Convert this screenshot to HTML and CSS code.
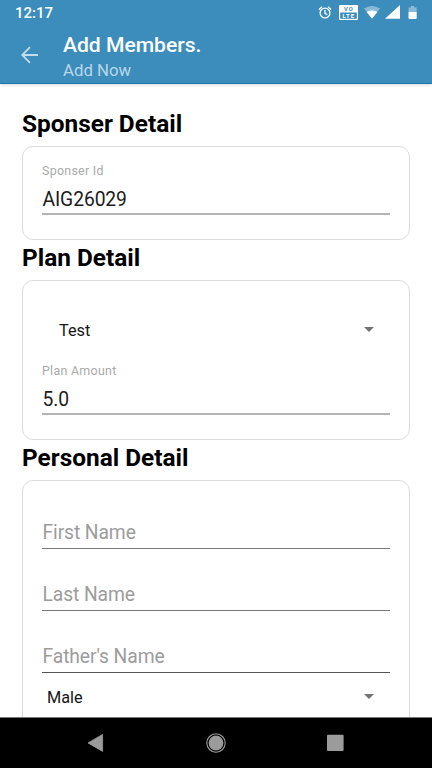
FILE: index.html
```html
<!DOCTYPE html>
<html lang="en">
<head>
<meta charset="utf-8">
<title>Add Members</title>
<link rel="stylesheet" href="styles.css">
</head>
<body>
<div class="screen">
  <header class="top">
    <div class="status">
      <span class="clock">12:17</span>
      <svg class="status-icons" width="102" height="20" viewBox="318 3 102 20">
        <g fill="none" stroke="#fff" stroke-width="1.3">
          <circle cx="325" cy="13" r="4.9"/>
          <path d="M325 10v3.3l2.3 1.4M319 9.4l3-2.6M331 9.4l-3-2.6"/>
        </g>
        <rect x="339" y="5" width="19" height="15" rx="1" fill="#fff"/>
        <rect x="340.2" y="12.5" width="16.6" height="6.3" fill="#3c8dbc"/>
        <text class="vo" x="348.8" y="11.2">VO</text>
        <text class="lte" x="348.8" y="18.2">LTE</text>
        <path d="M364 8.5Q372 3.5 380 8.5L372 18.4Z" fill="#fff" opacity=".4"/>
        <path d="M366.7 11.9Q372 9.3 377.3 11.9L372 18.4Z" fill="#fff"/>
        <path d="M385 18.8L400 5v13.8Z" fill="#fff"/>
        <path d="M408.5 12V7.6h2.4V6h3.3v1.6h2.5V12Z" fill="#fff" opacity=".4"/>
        <path d="M408.5 12h8.2v6q0 .9-.9.9h-6.4q-.9 0-.9-.9Z" fill="#fff"/>
      </svg>
    </div>
    <div class="bar">
      <svg class="back" width="18" height="18" viewBox="0 0 18 18"><path d="M17 9H1.5M9 1.2L1.2 9L9 16.8"/></svg>
      <div class="titles">
        <h1>Add Members.</h1>
        <p>Add Now</p>
      </div>
    </div>
  </header>
  <main>
    <h2>Sponser Detail</h2>
    <section class="card sponser">
      <div class="field readonly"><label>Sponser Id</label><div class="value">AIG26029</div></div>
    </section>
    <h2>Plan Detail</h2>
    <section class="card plan">
      <div class="select inset"><span>Test</span><i class="caret"></i></div>
      <div class="field readonly"><label>Plan Amount</label><div class="value">5.0</div></div>
    </section>
    <h2>Personal Detail</h2>
    <section class="card personal">
      <div class="field empty"><div class="value">First Name</div></div>
      <div class="field empty"><div class="value">Last Name</div></div>
      <div class="field empty"><div class="value">Father's Name</div></div>
      <div class="select"><span>Male</span><i class="caret"></i></div>
    </section>
  </main>
  <nav class="nav">
    <svg width="432" height="51" viewBox="0 717 432 51">
      <g fill="#9b9b9b">
        <path d="M88 742.9L102.6 734.4V751.4Z" stroke="#9b9b9b" stroke-width=".8" stroke-linejoin="round"/>
        <circle cx="216" cy="743" r="7.4"/>
        <circle cx="216" cy="743" r="9.2" fill="none" stroke="#9b9b9b" stroke-width="1.1"/>
        <rect x="327" y="734.7" width="16.6" height="16.3" rx="1"/>
      </g>
    </svg>
  </nav>
</div>
</body>
</html>
```

FILE: styles.css
```css
* { box-sizing: border-box; }
body { margin: 0; font-family: Roboto, sans-serif; color: #000; background: #fff; }
h1, h2, p { margin: 0; }
svg { display: block; }
.screen { height: 768px; display: flex; flex-direction: column; overflow: hidden; }

.top { flex: none; height: 84px; background: #3c8dbc; border-bottom: 1px solid #1878b0; color: #fff; box-shadow: 0 1px 3px rgba(0,0,0,.16); z-index: 1; }
.status { height: 26px; display: flex; justify-content: space-between; padding: 3px 12px 0 15px; }
.clock { font-size: 15px; font-weight: 500; line-height: 21px; }
.vo, .lte { font-family: Roboto, sans-serif; font-weight: 700; text-anchor: middle; }
.vo { font-size: 5.8px; fill: #3c8dbc; letter-spacing: .8px; }
.lte { font-size: 6px; fill: #fff; letter-spacing: .9px; }
.bar { height: 57px; display: flex; padding: 6px 0 0 21px; }
.back { margin-top: 14px; fill: none; stroke: #c3dceb; stroke-width: 1.8; }
.titles { margin-left: 24px; }
h1 { font-size: 21.1px; font-weight: 500; line-height: 26px; }
.titles p { font-size: 16.8px; line-height: 24px; color: #b9d6e7; }

main { flex: 1; min-height: 0; overflow: hidden; padding: 22px 22px 0; }
h2 { height: 40px; font-size: 24.4px; font-weight: 700; line-height: 36px; }
.card { border: 1px solid #dcdcdc; border-radius: 11px; padding: 0 19px; }
.sponser { height: 94px; padding-top: 15px; }
.plan { height: 160px; padding-top: 29px; }
.personal { height: 300px; padding-top: 38px; }
.field label { display: block; font-size: 12.4px; line-height: 18px; height: 18px; color: #aaa; letter-spacing: .3px; }
.field .value { font-size: 19.3px; font-weight: 400; line-height: 27px; padding-left: .5px; letter-spacing: -.1px; }
.readonly .value { height: 35px; padding-top: 6px; border-bottom: 2px solid #b4b4b4; color: #1c1c1c; }
.empty .value { height: 30px; margin-bottom: 32px; border-bottom: 1px solid #777; color: #9c9c9c; }
.empty:nth-child(3) .value { margin-bottom: 8px; border-color: #555; }
.select { display: flex; align-items: center; justify-content: space-between; height: 31px; padding: 0 16px 0 5px; font-size: 16.3px; color: #161616; }
.select span { padding-top: 2px; }
.inset { padding-left: 17px; height: 39px; margin-bottom: 13px; }
.caret { border: 5px solid transparent; border-top-color: #737373; border-bottom: 0; }

.nav { flex: none; height: 51px; background: #000; border-top: 1px solid #777; }
.nav svg { margin-top: -1px; }
```
